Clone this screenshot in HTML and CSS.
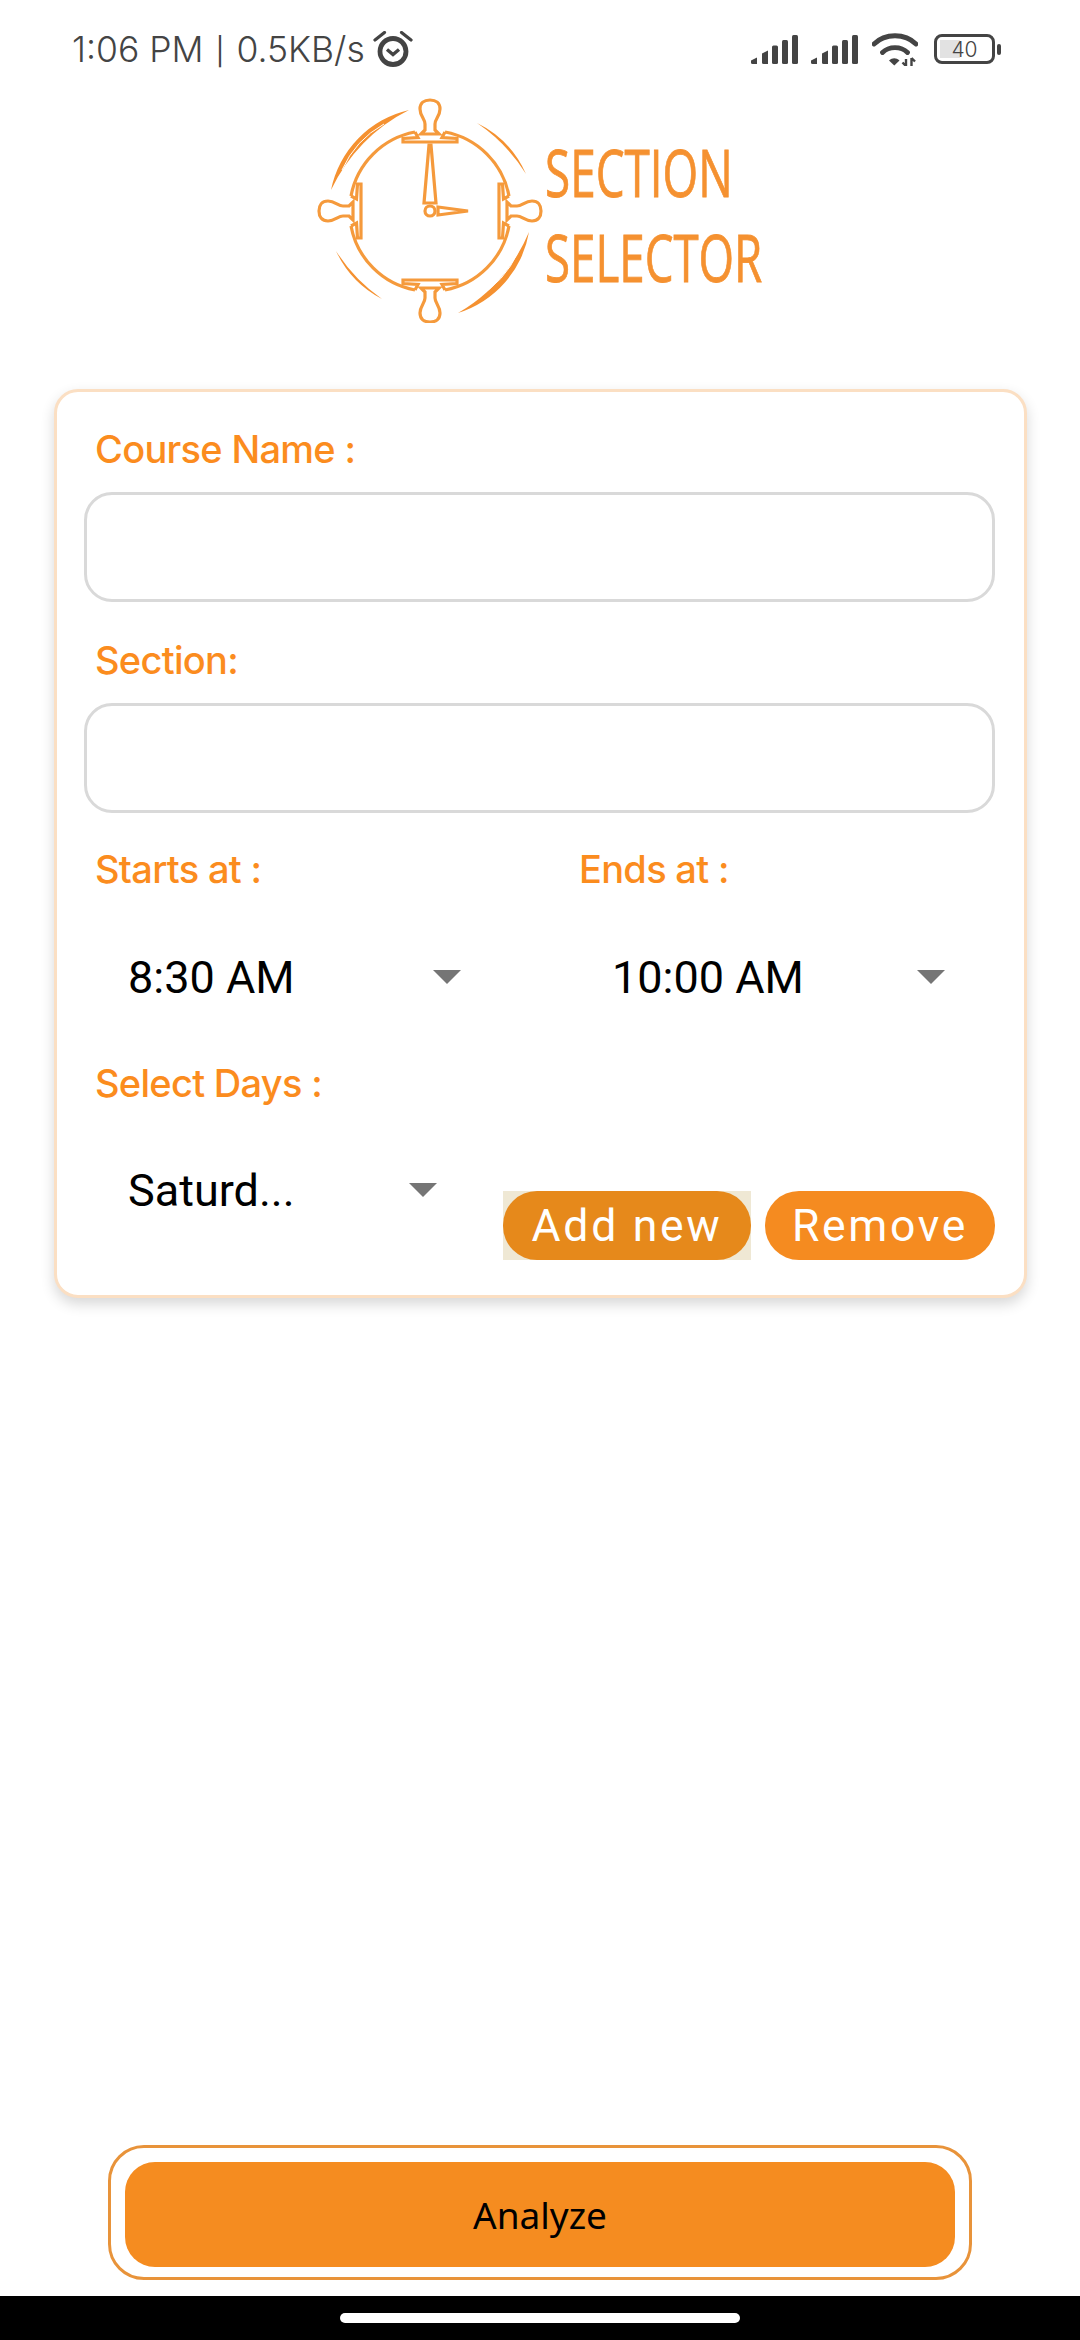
FILE: index.html
```html
<!DOCTYPE html>
<html>
<head>
    <link rel="stylesheet" href="styles.css">
</head>
<body>
    <div class="status-bar">
        <span class="status-text">1:06 PM <span class="status-pipe">|</span> 0.5KB/s</span>
        <svg class="alarm" width="40" height="36" viewBox="0 0 40 36">
            <circle cx="20" cy="20.500" r="13" fill="none" stroke="#444" stroke-width="4.800"/>
            <path d="M14 18.500l6 5 6-5" fill="none" stroke="#444" stroke-width="3.400"/>
            <path d="M2 9L11.500 1.500M38 9L28.500 1.500" stroke="#444" stroke-width="3.200" stroke-linecap="round"/>
        </svg>
        <span class="status-gap"></span>
        <svg class="signal" width="47" height="29" viewBox="0 0 47 29">
            <path d="M0 25.500L6 22.500V29H1.500A1.500 1.500 0 0 1 0 27.500z" fill="#444"/>
            <path d="M11 18.500L17 15.500V29H12.500A1.500 1.500 0 0 1 11 27.500z" fill="#444"/>
            <rect x="21" y="10.500" width="6" height="18.500" rx="1.500" fill="#444"/>
            <rect x="31" y="5" width="6" height="24" rx="1.500" fill="#444"/>
            <rect x="41" y="0" width="6" height="29" rx="1.500" fill="#444"/>
        </svg>
        <svg class="signal" width="47" height="29" viewBox="0 0 47 29">
            <path d="M0 25.500L6 22.500V29H1.500A1.500 1.500 0 0 1 0 27.500z" fill="#444"/>
            <path d="M11 18.500L17 15.500V29H12.500A1.500 1.500 0 0 1 11 27.500z" fill="#444"/>
            <rect x="21" y="10.500" width="6" height="18.500" rx="1.500" fill="#444"/>
            <rect x="31" y="5" width="6" height="24" rx="1.500" fill="#444"/>
            <rect x="41" y="0" width="6" height="29" rx="1.500" fill="#444"/>
        </svg>
        <svg class="wifi" width="46" height="33" viewBox="0 0 46 33">
            <path d="M2 11C13 0 33 0 44 11M10.500 19.500C17 13 29 13 35.500 19.500" fill="none" stroke="#444" stroke-width="4.800" stroke-linecap="round"/>
            <path d="M17 27.500c3.500-3 7-3 10.500 0l-5.200 5z" fill="#444"/>
            <path d="M34 26v7M39.500 33v-8M30.500 29.500l3.500 3.500M39.500 25l3.500 3.500" fill="none" stroke="#444" stroke-width="2.400"/>
        </svg>
        <div class="battery">
            <div class="battery-body">
                <div class="battery-level"></div>
                <span class="battery-text">40</span>
            </div>
            <div class="battery-tip"></div>
        </div>
    </div>

    <div class="logo">
        <svg width="470" height="225" viewBox="300 98 470 225">
            <defs>
                <g id="connector" fill="none" stroke="#f59a3c" stroke-width="3.200">
                    <path d="M-15 -79L-12 -73.500L-27 -72.500V-69H27V-72.500L12 -73.500L15 -79"/>
                    <path d="M-9 -77H9L5 -81V-87C5 -92 10 -95 10 -102C10 -108 6 -111 0 -111C-6 -111 -10 -108 -10 -102C-10 -95 -5 -92 -5 -87V-81z"/>
                </g>
            </defs>
            <g transform="translate(430 211)">
                <use href="#connector"/>
                <use href="#connector" transform="rotate(90)"/>
                <use href="#connector" transform="rotate(180)"/>
                <use href="#connector" transform="rotate(270)"/>
                <g fill="none" stroke="#f59a3c" stroke-width="3.200">
                    <path d="M15 -79A80 80 0 0 1 79 -15"/>
                    <path d="M79 15A80 80 0 0 1 15 79"/>
                    <path d="M-15 79A80 80 0 0 1 -79 15"/>
                    <path d="M-79 -15A80 80 0 0 1 -15 -79"/>
                    <path d="M-1 -66L-6 -8H6L1 -66z"/>
                    <circle cx="0" cy="0" r="5"/>
                    <path d="M8 -4V4L38 0z"/>
                </g>
                <g fill="#f59130">
                    <path d="M-99 -21A103 103 0 0 1 -21 -101A170 170 0 0 0 -99 -21z"/>
                    <path d="M47 -88A103 103 0 0 1 96 -37A170 170 0 0 0 47 -88z"/>
                    <path d="M99 21A103 103 0 0 1 28 102A170 170 0 0 0 99 21z"/>
                    <path d="M-94 40A103 103 0 0 0 -48 88A170 170 0 0 1 -94 40z"/>
                </g>
                <g fill="none" stroke="#fff" stroke-width="1">
                    <path d="M-88 -41A98.500 98.500 0 0 1 -46 -87"/>
                    <path d="M88 41A98.500 98.500 0 0 1 46 87"/>
                </g>
                <text class="logo-text" transform="translate(115 -14) scale(.695 1)">SECTION</text>
                <text class="logo-text" transform="translate(115 71) scale(.692 1)">SELECTOR</text>
            </g>
        </svg>
    </div>

    <div class="card">
        <div class="field-label">Course Name :</div>
        <input class="text-input" type="text">

        <div class="field-label section-label">Section:</div>
        <input class="text-input" type="text">

        <div class="time-row">
            <div class="time-col">
                <div class="field-label">Starts at :</div>
                <div class="dropdown">
                    <span>8:30 AM</span>
                    <span class="arrow"></span>
                </div>
            </div>
            <div class="time-col">
                <div class="field-label">Ends at :</div>
                <div class="dropdown">
                    <span>10:00 AM</span>
                    <span class="arrow"></span>
                </div>
            </div>
        </div>

        <div class="field-label days-label">Select Days :</div>
        <div class="days-row">
            <div class="dropdown days-dropdown">
                <span>Saturd...</span>
                <span class="arrow"></span>
            </div>
            <div class="action-buttons">
                <div class="add-wrap"><button class="pill-btn add-btn">Add new</button></div>
                <button class="pill-btn remove-btn">Remove</button>
            </div>
        </div>
    </div>

    <div class="bottom">
        <div class="analyze-frame">
            <button class="analyze-btn">Analyze</button>
        </div>
    </div>

    <div class="nav-bar">
        <div class="nav-pill"></div>
    </div>
</body>
</html>
```

FILE: styles.css
```css
body {
    margin: 0;
    width: 1080px;
    height: 2340px;
    display: flex;
    flex-direction: column;
    background-color: #fff;
    font-family: Inter, "Liberation Sans", sans-serif;
    overflow: hidden;
}
.status-bar {
    height: 98px;
    padding: 0 79px 0 72px;
    box-sizing: border-box;
    display: flex;
    align-items: center;
    color: #444;
}
.status-text {
    font-family: Inter, sans-serif;
    font-size: 35.5px;
    font-weight: 300;
    white-space: nowrap;
}
.status-pipe {
    font-size: 27px;
    font-weight: 400;
    margin: 0 2px;
    vertical-align: 1px;
}
.alarm {
    margin-left: 8px;
}
.status-gap {
    flex: 1;
}
.signal {
    margin-right: 13px;
}
.wifi {
    margin-left: 1px;
    margin-right: 16px;
}
.battery {
    display: flex;
    align-items: center;
}
.battery-body {
    position: relative;
    width: 61px;
    height: 30px;
    border: 3px solid #444;
    border-radius: 8px;
    box-sizing: border-box;
    display: flex;
    align-items: center;
    justify-content: center;
}
.battery-level {
    position: absolute;
    left: 3px;
    top: 3px;
    bottom: 3px;
    width: 20px;
    background-color: #e2e2e2;
}
.battery-text {
    position: relative;
    font-size: 21px;
    font-weight: 300;
    color: #444;
}
.battery-tip {
    width: 4px;
    height: 11px;
    margin-left: 2px;
    background-color: #444;
    border-radius: 2px;
}
.logo {
    height: 204px;
    padding-left: 300px;
}
.logo svg {
    display: block;
}
.logo-text {
    font-family: "Open Sans", sans-serif;
    font-size: 66px;
    fill: #f59130;
    stroke: #f59130;
    stroke-width: 0.8px;
}
.card {
    width: 973px;
    height: 909px;
    margin: 87px 0 0 54px;
    padding: 32px 29px 0 27px;
    box-sizing: border-box;
    background-color: #fff;
    border: 3px solid #fbdfc3;
    border-radius: 24px;
    box-shadow: 0 6px 14px rgba(0, 0, 0, 0.16);
}
.field-label {
    height: 50px;
    line-height: 50px;
    margin-left: 11px;
    font-size: 38px;
    font-weight: 500;
    letter-spacing: -0.7px;
    color: #fb8c1e;
}
.text-input {
    display: block;
    width: 100%;
    height: 110px;
    margin-top: 18px;
    box-sizing: border-box;
    border: 3px solid #d9d9d9;
    border-radius: 28px;
    background-color: #fff;
}
.section-label {
    margin-top: 33px;
}
.time-row {
    display: grid;
    grid-template-columns: 484px 1fr;
    margin-top: 31px;
}
.dropdown {
    height: 100px;
    width: 392px;
    margin-top: 33px;
    padding: 0 15px 0 44px;
    box-sizing: border-box;
    display: flex;
    align-items: center;
    justify-content: space-between;
    font-family: Roboto, sans-serif;
    font-size: 45px;
    color: #000;
}
.arrow {
    width: 0;
    height: 0;
    border-left: 14px solid transparent;
    border-right: 14px solid transparent;
    border-top: 14px solid #757575;
}
.days-label {
    margin-top: 31px;
}
.days-row {
    display: flex;
    justify-content: space-between;
    align-items: flex-start;
}
.days-dropdown {
    width: 368px;
    margin-top: 32px;
}
.action-buttons {
    display: flex;
    gap: 14px;
    margin-top: 83px;
}
.add-wrap {
    background-color: #efe8d4;
}
.pill-btn {
    display: block;
    height: 69px;
    padding: 0;
    border: none;
    border-radius: 34px;
    font-family: Roboto, sans-serif;
    font-size: 44.5px;
    letter-spacing: 2.7px;
    color: #fff;
}
.add-btn {
    width: 248px;
    background-color: #e6891b;
}
.remove-btn {
    width: 230px;
    background-color: #f58b20;
}
.bottom {
    flex: 1;
    display: flex;
    flex-direction: column;
    justify-content: flex-end;
    padding: 0 108px 16px;
}
.analyze-frame {
    height: 135px;
    padding: 14px;
    box-sizing: border-box;
    border: 3px solid #e8933a;
    border-radius: 36px;
}
.analyze-btn {
    display: block;
    width: 100%;
    height: 105px;
    border: none;
    border-radius: 30px;
    background-color: #f58c20;
    font-family: "Noto Sans", sans-serif;
    font-size: 37px;
    color: #000;
}
.nav-bar {
    height: 44px;
    background-color: #000;
    display: flex;
    justify-content: center;
    padding-top: 17px;
    box-sizing: border-box;
}
.nav-pill {
    width: 400px;
    height: 10px;
    background-color: #fff;
    border-radius: 5px;
}
```
